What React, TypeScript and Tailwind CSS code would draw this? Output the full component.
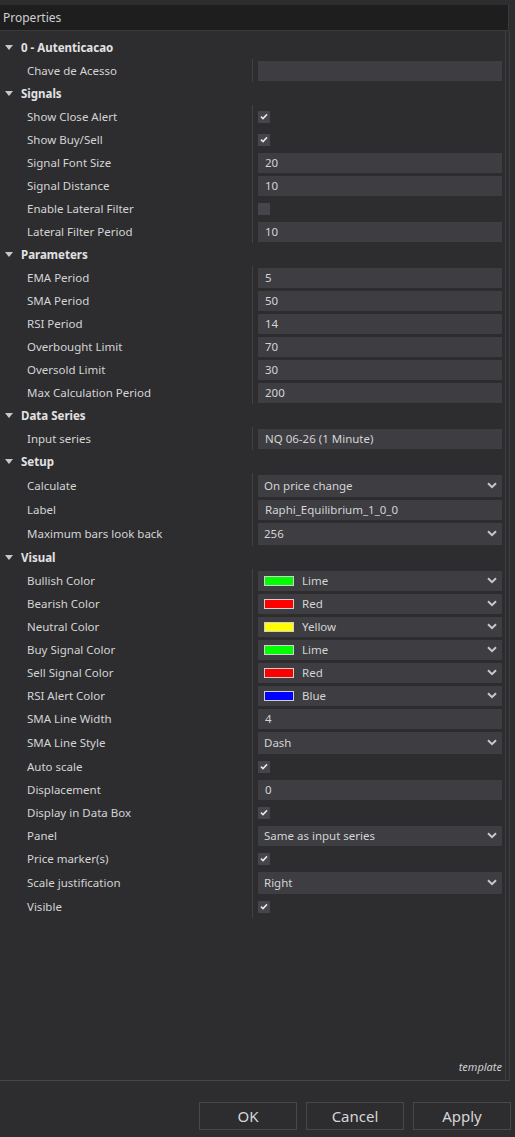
import React from "react";

type Value =
  | { t: "text"; v?: string }
  | { t: "check"; on: boolean }
  | { t: "select"; v: string; color?: string };

type Row =
  | { kind: "cat"; label: string }
  | { kind: "prop"; label: string; value: Value; h?: string };

const rows: Row[] = [
  { kind: "cat", label: "0 - Autenticacao" },
  { kind: "prop", label: "Chave de Acesso", value: { t: "text" } },
  { kind: "cat", label: "Signals" },
  { kind: "prop", label: "Show Close Alert", value: { t: "check", on: true } },
  { kind: "prop", label: "Show Buy/Sell", value: { t: "check", on: true } },
  { kind: "prop", label: "Signal Font Size", value: { t: "text", v: "20" } },
  { kind: "prop", label: "Signal Distance", value: { t: "text", v: "10" } },
  { kind: "prop", label: "Enable Lateral Filter", value: { t: "check", on: false } },
  { kind: "prop", label: "Lateral Filter Period", value: { t: "text", v: "10" } },
  { kind: "cat", label: "Parameters" },
  { kind: "prop", label: "EMA Period", value: { t: "text", v: "5" } },
  { kind: "prop", label: "SMA Period", value: { t: "text", v: "50" } },
  { kind: "prop", label: "RSI Period", value: { t: "text", v: "14" } },
  { kind: "prop", label: "Overbought Limit", value: { t: "text", v: "70" } },
  { kind: "prop", label: "Oversold Limit", value: { t: "text", v: "30" } },
  { kind: "prop", label: "Max Calculation Period", value: { t: "text", v: "200" } },
  { kind: "cat", label: "Data Series" },
  { kind: "prop", label: "Input series", value: { t: "text", v: "NQ 06-26 (1 Minute)" } },
  { kind: "cat", label: "Setup" },
  { kind: "prop", label: "Calculate", value: { t: "select", v: "On price change" }, h: "h-[25px]" },
  { kind: "prop", label: "Label", value: { t: "text", v: "Raphi_Equilibrium_1_0_0" } },
  { kind: "prop", label: "Maximum bars look back", value: { t: "select", v: "256" }, h: "h-[25px]" },
  { kind: "cat", label: "Visual" },
  { kind: "prop", label: "Bullish Color", value: { t: "select", v: "Lime", color: "bg-[#00ff00]" } },
  { kind: "prop", label: "Bearish Color", value: { t: "select", v: "Red", color: "bg-[#ff0000]" } },
  { kind: "prop", label: "Neutral Color", value: { t: "select", v: "Yellow", color: "bg-[#ffff00]" } },
  { kind: "prop", label: "Buy Signal Color", value: { t: "select", v: "Lime", color: "bg-[#00ff00]" } },
  { kind: "prop", label: "Sell Signal Color", value: { t: "select", v: "Red", color: "bg-[#ff0000]" } },
  { kind: "prop", label: "RSI Alert Color", value: { t: "select", v: "Blue", color: "bg-[#0000ff]" } },
  { kind: "prop", label: "SMA Line Width", value: { t: "text", v: "4" } },
  { kind: "prop", label: "SMA Line Style", value: { t: "select", v: "Dash" }, h: "h-[25px]" },
  { kind: "prop", label: "Auto scale", value: { t: "check", on: true } },
  { kind: "prop", label: "Displacement", value: { t: "text", v: "0" } },
  { kind: "prop", label: "Display in Data Box", value: { t: "check", on: true } },
  { kind: "prop", label: "Panel", value: { t: "select", v: "Same as input series" } },
  { kind: "prop", label: "Price marker(s)", value: { t: "check", on: true } },
  { kind: "prop", label: "Scale justification", value: { t: "select", v: "Right" }, h: "h-[25px]" },
  { kind: "prop", label: "Visible", value: { t: "check", on: true } },
];

function Chevron() {
  return (
    <svg width="10" height="7" viewBox="0 0 10 7" className="mr-[5px] shrink-0">
      <path d="M1 1.2 L5 5.2 L9 1.2" fill="none" stroke="#c8c8c8" strokeWidth="2" />
    </svg>
  );
}

function ValueCell({ value }: { value: Value }) {
  if (value.t === "check") {
    return (
      <div className="w-[12px] h-[12px] bg-[#45454b] flex items-center justify-center">
        {value.on && (
          <svg width="8" height="7" viewBox="0 0 8 7">
            <path d="M1 3.6 L3 5.6 L7 1.4" fill="none" stroke="#e6e6e6" strokeWidth="1.6" />
          </svg>
        )}
      </div>
    );
  }
  if (value.t === "select") {
    return (
      <div className="w-[244px] h-[calc(100%-3px)] bg-[#3d3d42] flex items-center">
        {value.color ? (
          <>
            <div className={`ml-[6px] w-[30px] h-[10px] border border-[#d0d0d0] ${value.color}`} />
            <span className="ml-[8px] flex-1">{value.v}</span>
          </>
        ) : (
          <span className="pl-[6px] flex-1">{value.v}</span>
        )}
        <Chevron />
      </div>
    );
  }
  return (
    <div className="w-[244px] h-[20px] bg-[#3d3d42] flex items-center pl-[7px]">
      {value.v ?? ""}
    </div>
  );
}

export default function App() {
  return (
    <div className="w-[515px] h-[1137px] bg-[#2d2d30] flex flex-col text-[11.5px] text-[#d4d4d4] font-['Noto_Sans',sans-serif] overflow-hidden">
      <div className="h-[5px] shrink-0" />
      <div className="h-[26px] w-[509px] bg-[#1e1e1f] border-r border-b border-[#3a3a3d] flex items-center pl-[3px] text-[12px] text-[#d0d0d0] shrink-0">
        Properties
      </div>
      <div className="flex shrink-0 h-[1050px] border-b border-[#47474b] w-[510px]">
        <div className="w-[506px] border-r border-[#3f3f43] flex flex-col pt-[5px]">
          {rows.map((row, i) =>
            row.kind === "cat" ? (
              <div key={i} className="h-[23px] flex items-center">
                <svg width="8" height="5" viewBox="0 0 8 5" className="ml-[5px] mr-[8px]">
                  <path d="M0 0 H8 L4 5 Z" fill="#c8c8c8" />
                </svg>
                <span className="font-bold text-[#e2e2e2]">{row.label}</span>
              </div>
            ) : (
              <div key={i} className={`${row.h ?? "h-[23px]"} flex items-center`}>
                <div className="w-[253px] h-full flex items-center pl-[27px] border-r border-[#424246]">
                  {row.label}
                </div>
                <div className="pl-[5px] h-full flex items-center">
                  <ValueCell value={row.value} />
                </div>
              </div>
            )
          )}
          <div className="flex-1" />
          <div className="text-right italic text-[11px] text-[#cfcfcf] pr-[3px] pb-[5px]">template</div>
        </div>
        <div className="w-[4px] border-r border-[#3f3f43]" />
      </div>
      <div className="flex justify-end gap-[9px] pr-[4px] pt-[21px]">
        {["OK", "Cancel", "Apply"].map((b) => (
          <div
            key={b}
            className="w-[98px] h-[28px] border border-[#48484c] flex items-center justify-center text-[15px] text-[#d6d6d6]"
          >
            {b}
          </div>
        ))}
      </div>
    </div>
  );
}
